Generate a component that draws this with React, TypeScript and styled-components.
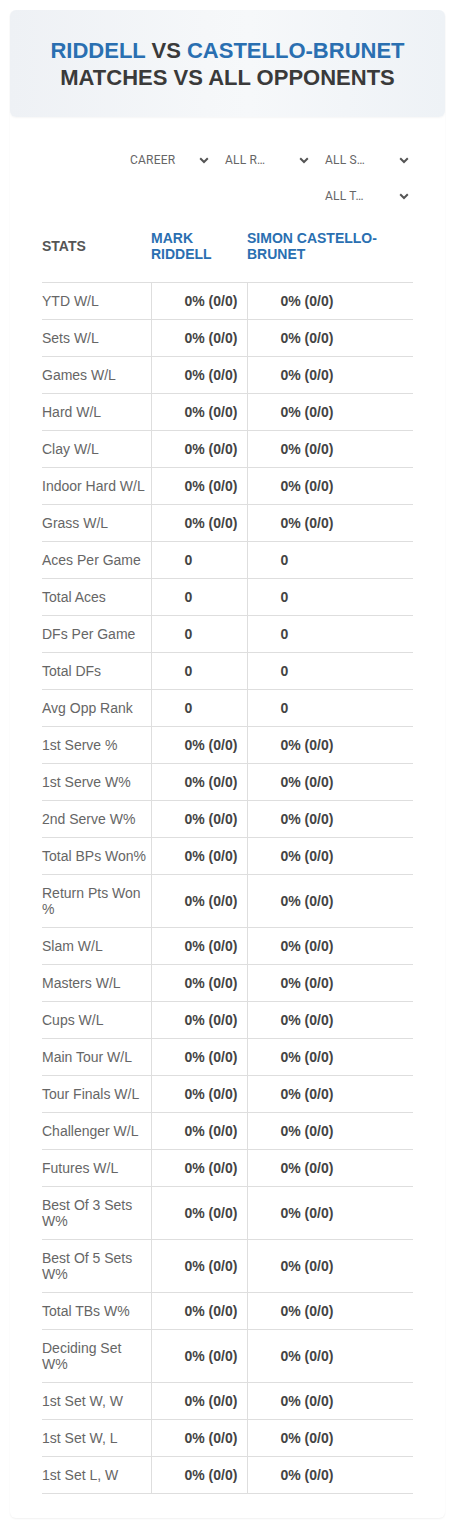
import React from "react";
import styled, { createGlobalStyle } from "styled-components";

const GlobalStyle = createGlobalStyle`
  html, body { margin: 0; padding: 0; background: #ffffff; }
  body { font-family: "Liberation Sans", Arial, sans-serif; }
  * { box-sizing: border-box; }
`;

const Page = styled.div`
  padding: 10px 10px 8px 10px;
`;

const Card = styled.div`
  background: #fff;
  border-radius: 6px;
  box-shadow: 0 1px 2px rgba(0, 0, 0, 0.06);
`;

const Banner = styled.header`
  border-radius: 6px;
  height: 107px;
  display: flex;
  flex-direction: column;
  align-items: center;
  justify-content: center;
  background: linear-gradient(90deg, #eef1f5 0%, #f5f7f9 45%, #f6f8fa 55%, #eef2f6 100%);
  box-shadow: 0 1px 2px rgba(0, 0, 0, 0.04);
`;

const Title = styled.h1`
  margin: 0;
  font-size: 22px;
  line-height: 27px;
  font-weight: 700;
  color: #3a3a3a;
  text-align: center;
`;

const Blue = styled.span`
  color: #2a6fb1;
`;

const Body = styled.div`
  padding: 29px 32px 24px 32px;
`;

const Filters = styled.div`
  display: flex;
  flex-wrap: wrap;
  justify-content: flex-end;
  row-gap: 8px;
  margin-right: -5px;
  margin-left: 76px;
`;

const Select = styled.div<{ $indent: number }>`
  width: 100px;
  height: 28px;
  display: flex;
  align-items: center;
  justify-content: space-between;
  padding: 0 9px 0 ${(p) => p.$indent}px;
  font-family: Roboto, "Liberation Sans", sans-serif;
  font-size: 12px;
  color: #666;
  letter-spacing: 0.2px;
`;

const Chevron = () => (
  <svg width="10" height="7" viewBox="0 0 10 7" aria-hidden="true">
    <path d="M1.2 1.3 L5 5 L8.8 1.3" fill="none" stroke="#555" strokeWidth="2" />
  </svg>
);

const Table = styled.table`
  width: 100%;
  margin-top: 12px;
  border-collapse: collapse;
  table-layout: fixed;
`;

const HeadCell = styled.th<{ $blue?: boolean }>`
  padding: 8px 0 20px 0;
  text-align: left;
  vertical-align: middle;
  font-size: 14px;
  line-height: 16px;
  font-weight: 700;
  color: ${(p) => (p.$blue ? "#2a6fb1" : "#555")};
  border-bottom: 1px solid #dedede;
`;

const Row = styled.tr`
  border-bottom: 1px solid #dedede;
`;

const Label = styled.td`
  padding: 10px 4px 10px 0;
  font-size: 14px;
  line-height: 16px;
  color: #666;
  vertical-align: middle;
`;

const Value = styled.td<{ $divided?: boolean }>`
  padding: 10px 0 10px 33px;
  font-size: 14px;
  line-height: 16px;
  font-weight: 700;
  color: #444;
  vertical-align: middle;
  border-left: ${(p) => (p.$divided ? "1px solid #dedede" : "none")};
`;

const pct = "0% (0/0)";

const rows: [string, string][] = [
  ["YTD W/L", pct],
  ["Sets W/L", pct],
  ["Games W/L", pct],
  ["Hard W/L", pct],
  ["Clay W/L", pct],
  ["Indoor Hard W/L", pct],
  ["Grass W/L", pct],
  ["Aces Per Game", "0"],
  ["Total Aces", "0"],
  ["DFs Per Game", "0"],
  ["Total DFs", "0"],
  ["Avg Opp Rank", "0"],
  ["1st Serve %", pct],
  ["1st Serve W%", pct],
  ["2nd Serve W%", pct],
  ["Total BPs Won%", pct],
  ["Return Pts Won %", pct],
  ["Slam W/L", pct],
  ["Masters W/L", pct],
  ["Cups W/L", pct],
  ["Main Tour W/L", pct],
  ["Tour Finals W/L", pct],
  ["Challenger W/L", pct],
  ["Futures W/L", pct],
  ["Best Of 3 Sets W%", pct],
  ["Best Of 5 Sets W%", pct],
  ["Total TBs W%", pct],
  ["Deciding Set W%", pct],
  ["1st Set W, W", pct],
  ["1st Set W, L", pct],
  ["1st Set L, W", pct],
];

const filters: [string, number][] = [
  ["CAREER", 12],
  ["ALL R…", 7],
  ["ALL S…", 7],
  ["ALL T…", 7],
];

export default function App() {
  return (
    <>
      <GlobalStyle />
      <Page>
        <Card>
          <Banner>
            <Title>
              <Blue>RIDDELL</Blue> VS <Blue>CASTELLO-BRUNET</Blue>
            </Title>
            <Title>MATCHES VS ALL OPPONENTS</Title>
          </Banner>
          <Body>
            <Filters>
              {filters.map(([label, indent]) => (
                <Select key={label} $indent={indent}>
                  <span>{label}</span>
                  <Chevron />
                </Select>
              ))}
            </Filters>
            <Table>
              <colgroup>
                <col style={{ width: 109 }} />
                <col style={{ width: 96 }} />
                <col style={{ width: 96 }} />
                <col />
              </colgroup>
              <thead>
                <tr>
                  <HeadCell>STATS</HeadCell>
                  <HeadCell $blue>MARK RIDDELL</HeadCell>
                  <HeadCell $blue colSpan={2}>
                    SIMON CASTELLO-BRUNET
                  </HeadCell>
                </tr>
              </thead>
              <tbody>
                {rows.map(([label, value]) => (
                  <Row key={label}>
                    <Label>{label}</Label>
                    <Value $divided>{value}</Value>
                    <Value $divided>{value}</Value>
                    <Value />
                  </Row>
                ))}
              </tbody>
            </Table>
          </Body>
        </Card>
      </Page>
    </>
  );
}
